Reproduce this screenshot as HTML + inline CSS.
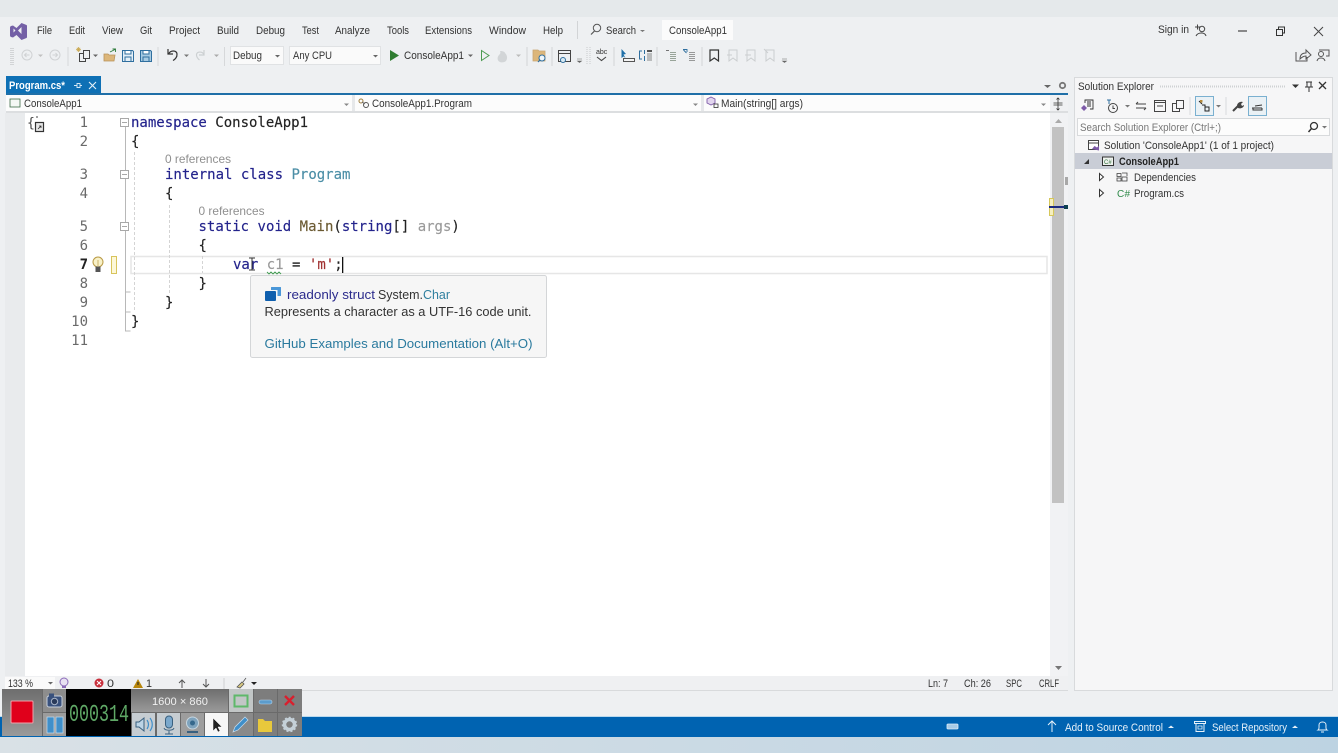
<!DOCTYPE html>
<html><head><meta charset="utf-8"><title>ConsoleApp1</title>
<style>
html,body{margin:0;padding:0;background:#eef0f2;overflow:hidden}
svg{display:block;width:1338px;height:753px;filter:blur(.35px)}
text{font-family:"Liberation Sans",sans-serif;font-size:11px;fill:#333}
.c text,text.c{font-family:"DejaVu Sans Mono","Liberation Mono",monospace;font-size:14px;fill:#222;stroke:#222;stroke-width:.15}
.n{font-family:"DejaVu Sans Mono","Liberation Mono",monospace;font-size:14px;fill:#6a6a6a;text-anchor:end}
.k{fill:#23238c;stroke:#23238c}.t{fill:#4b8ea6;stroke:#4b8ea6}.g{fill:#9a9a9a;stroke:#9a9a9a}
</style></head><body>
<svg xmlns="http://www.w3.org/2000/svg" viewBox="0 0 1338 753" width="1338" height="753">
<defs>
<linearGradient id="bot" x1="0" x2="1" y1="0" y2="0"><stop offset="0" stop-color="#d9e1e6"/><stop offset="1" stop-color="#bdd3e2"/></linearGradient>
<linearGradient id="rg" x1="0" x2="0" y1="0" y2="1"><stop offset="0" stop-color="#6e6e6e"/><stop offset="1" stop-color="#9a9a9a"/></linearGradient>
</defs>
<!-- base -->
<rect width="1338" height="753" fill="#eef0f2"/>
<rect width="1338" height="17" fill="#e5e9eb"/>
<rect y="737" width="1338" height="16" fill="url(#bot)"/>
<rect y="717" width="1338" height="20" fill="#0063b1"/>
<rect y="716" width="1338" height="1" fill="#b9d9ee"/>

<!-- logo -->
<path d="M10 27.500q0-1 1-1.500l2-.5 3.500 2.500 5-5 5 2q.5.300.5 1v11q0 .7-.5 1l-5 2-5-5-3.500 2.500-2-.5q-1-.500-1-1.500z" fill="#7460a6"/>
<path d="M13.500 28.500v4l2-2zM21.500 27l-3.500 3.500 3.500 3.500z" fill="#eef0f2"/>

<!-- menu -->
<g>
<text x="37" y="34" textLength="15" lengthAdjust="spacingAndGlyphs">File</text>
<text x="69" y="34" textLength="16" lengthAdjust="spacingAndGlyphs">Edit</text>
<text x="102" y="34" textLength="21" lengthAdjust="spacingAndGlyphs">View</text>
<text x="140" y="34" textLength="12" lengthAdjust="spacingAndGlyphs">Git</text>
<text x="169" y="34" textLength="31" lengthAdjust="spacingAndGlyphs">Project</text>
<text x="217" y="34" textLength="22" lengthAdjust="spacingAndGlyphs">Build</text>
<text x="256" y="34" textLength="29" lengthAdjust="spacingAndGlyphs">Debug</text>
<text x="302" y="34" textLength="17" lengthAdjust="spacingAndGlyphs">Test</text>
<text x="335" y="34" textLength="35" lengthAdjust="spacingAndGlyphs">Analyze</text>
<text x="387" y="34" textLength="22" lengthAdjust="spacingAndGlyphs">Tools</text>
<text x="425" y="34" textLength="47" lengthAdjust="spacingAndGlyphs">Extensions</text>
<text x="489" y="34" textLength="37" lengthAdjust="spacingAndGlyphs">Window</text>
<text x="543" y="34" textLength="20" lengthAdjust="spacingAndGlyphs">Help</text>
<rect x="577" y="21" width="1" height="18" fill="#d2d4d6"/>
<circle cx="597" cy="28" r="3.700" fill="none" stroke="#555"/><path d="M594.500 31l-3.500 3.500" stroke="#555" stroke-width="1.200"/>
<text x="606" y="34" textLength="30" lengthAdjust="spacingAndGlyphs">Search</text>
<path d="M640 30h5l-2.500 2z" fill="#777"/>
<rect x="662" y="20" width="71" height="20" fill="#fbfbfb"/>
<text x="669" y="34" textLength="58" lengthAdjust="spacingAndGlyphs" fill="#222">ConsoleApp1</text>
</g>

<!-- toolbar -->
<g fill="none" stroke="#b5b8ba">
<path d="M11 48v17M13 48v17" stroke-dasharray="1 1"/>
<circle cx="27" cy="55" r="5" stroke="#d0d2d4"/><path d="M29.500 55h-5m2-2l-2 2 2 2" stroke="#d0d2d4"/>
<path d="M38 54.500h5l-2.500 2.500z" fill="#c0c0c0" stroke="none"/>
<circle cx="55" cy="55" r="5" stroke="#d0d2d4"/><path d="M52.500 55h5m-2-2l2 2-2 2" stroke="#d0d2d4"/>
<path d="M68 47v19M158 47v19M224.500 47v19" stroke="#d6d8da"/>
<!-- new project -->
<path d="M76 49.500h5M78.500 47v5M76.800 47.800l3.400 3.400M80.200 47.800l-3.400 3.400" stroke="#c9a84f" stroke-width=".8"/>
<rect x="79.500" y="53.500" width="6" height="8" stroke="#444" fill="#eef0f2"/><rect x="83.500" y="50.500" width="6" height="8" stroke="#444" fill="#eef0f2"/>
<path d="M93 54.500h5l-2.500 2.500z" fill="#666" stroke="none"/>
<!-- open -->
<path d="M104 61v-7h4l1 1h6l-1 6z" fill="#dcb67a" stroke="#b8935a" stroke-width=".8"/><path d="M110 52l5-2.500M112.500 49h3v3" stroke="#2c7a3a" stroke-width=".9"/>
<!-- saves -->
<path d="M122.500 50.500h10l1 1v10h-11z" stroke="#2f6f9f" fill="#e4eff7"/><rect x="125" y="50.500" width="6" height="3.500" stroke="#2f6f9f" fill="#fff"/><rect x="125" y="57" width="6" height="4.500" stroke="#2f6f9f"/>
<path d="M140.500 50.500h10l1 1v10h-11z" stroke="#2f6f9f" fill="#a8cbe2"/><rect x="143" y="50.500" width="6" height="3.500" stroke="#2f6f9f" fill="#fff"/><rect x="143" y="57" width="6" height="4.500" stroke="#2f6f9f"/>
<!-- undo/redo -->
<path d="M168 49v5h5M168.500 54c2-4 8-4 8.500 0 .3 3-2 5.500-4 6.500" stroke="#333" stroke-width="1.200"/>
<path d="M184 54.500h5l-2.500 2.500z" fill="#777" stroke="none"/>
<path d="M204 50v5h-5M204 54.500c-2-3.500-7-3-7.500 0-.3 2 1.500 4.500 3 5.500" stroke="#ccd0d2" stroke-width="1.200"/>
<path d="M214 54.500h5l-2.500 2.500z" fill="#aaa" stroke="none"/>
</g>
<rect x="230.500" y="46.500" width="53" height="18" fill="#fafafa" stroke="#e0e2e4"/>
<text x="233" y="59" textLength="29" lengthAdjust="spacingAndGlyphs">Debug</text>
<path d="M275 55h5l-2.500 2.500z" fill="#666"/>
<rect x="289.500" y="46.500" width="91" height="18" fill="#fafafa" stroke="#e0e2e4"/>
<text x="293" y="59" textLength="39" lengthAdjust="spacingAndGlyphs">Any CPU</text>
<path d="M373 55h5l-2.500 2.500z" fill="#666"/>
<path d="M390 50l9 5.500-9 5.500z" fill="#2f7d32"/>
<text x="404" y="59" textLength="60" lengthAdjust="spacingAndGlyphs">ConsoleApp1</text>
<path d="M468 54.500h5l-2.500 2.500z" fill="#666"/>
<path d="M481.500 50.500l7.500 5-7.500 5z" fill="none" stroke="#4c9a50"/>
<path d="M500 62c-3-1-3-5-1-7 1-1 2-2 1-4 3 0 5 1 5 2 2 2 3 5 1 8-1 1-4 2-6 1z" fill="#d2d5d7"/>
<path d="M516 54.500h5l-2.500 2.500z" fill="#bbb"/>
<g fill="none" stroke="#d2d4d6"><path d="M527 47v19M552 47v19M614 47v19M657 47v19M702 47v19"/></g>
<!-- folder search -->
<path d="M533 50h5l1 1h6v10h-12z" fill="#dcb67a" stroke="#c9a673" stroke-width=".8"/><circle cx="542" cy="58" r="3" fill="#eef5fa" stroke="#2f6f9f"/><path d="M540 60l-2 2" stroke="#2f6f9f" stroke-width="1.200"/>
<!-- window -->
<rect x="558.500" y="50.500" width="12" height="11" fill="none" stroke="#444"/><path d="M558.500 53.500h12" stroke="#444"/><circle cx="563" cy="60" r="2.500" fill="#d9e9f3" stroke="#2f6f9f"/>
<path d="M577 59h5M577.500 61h4l-2 1.500z" fill="#666" stroke="#666" stroke-width=".6"/>
<path d="M587 47v18M590 47v18" stroke="#c8cacc" stroke-dasharray="1 1"/>
<text x="596" y="54" style="font-size:7px" fill="#444">abc</text><path d="M597 57l4.500 3.500 4.500-3.500" fill="none" stroke="#444" stroke-width="1.100"/>
<!-- comment tools -->
<path d="M621.500 49v9l2-1.500 2 1.500-2-3.500 2.500-.5z" fill="#1f6fa8"/><rect x="623.500" y="58.500" width="11" height="3" fill="#f4f4f4" stroke="#444" stroke-width=".9"/>
<path d="M642 51h-2.500v8h2.500" fill="none" stroke="#2f6f9f"/><path d="M644.500 50v4M644.500 56v5" stroke="#2f6f9f"/><rect x="647" y="50" width="5" height="2" fill="#555"/><path d="M647 54h5M647 56h5M647 58h5M647 60h5" stroke="#666" stroke-width=".8"/>
<path d="M666 50.500h3" stroke="#555" stroke-width=".8"/><path d="M670 52.500h6M670 54.500h6M670 56.500h6M670 58.500h6M670 60.500h6" stroke="#7c8a7c" stroke-width=".8"/>
<path d="M683 49.500h4v2.500M683.500 50l3 3" fill="none" stroke="#2f6f9f" stroke-width=".9"/><path d="M689 52.500h6M689 54.500h6M689 56.500h6M689 58.500h6M689 60.500h6" stroke="#7c7c7c" stroke-width=".8"/>
<!-- bookmarks -->
<path d="M710 50h8.500v11l-4.250-3-4.250 3z" fill="none" stroke="#333" stroke-width="1.200"/>
<g fill="none" stroke="#cbced0"><path d="M729 50h8v11l-4-3-4 3zM727 55h5"/><path d="M747 50h8v11l-4-3-4 3zM745 55h6"/><path d="M766 50h8v11l-4-3-4 3zM764 49l4 4"/></g>
<path d="M782 59h5M782.500 61h4l-2 1.500z" fill="#666" stroke="#666" stroke-width=".6"/>

<!-- right title -->
<text x="1158" y="33" textLength="31" lengthAdjust="spacingAndGlyphs">Sign in</text>
<circle cx="1202" cy="29" r="2.700" fill="none" stroke="#444"/><path d="M1196 36c2-4 9-4 10 0M1195 27h5M1197.500 24.500v5" fill="none" stroke="#444"/>
<path d="M1238 31h9" stroke="#444" stroke-width="1.200"/>
<rect x="1276.500" y="29.500" width="6" height="6" fill="none" stroke="#333"/><path d="M1278.500 29v-2h6v6h-2" fill="none" stroke="#333"/>
<path d="M1314 27l9 9M1323 27l-9 9" stroke="#444"/>
<path d="M1296 52v9h11v-4M1300 59c0-4 2-6 6-6v-3l5 5-5 4v-3c-2 0-4 1-6 3z" fill="none" stroke="#555"/>
<circle cx="1321" cy="54" r="2.500" fill="none" stroke="#555"/><path d="M1317 61c1-4 7-4 8 0M1319 50h10v6h-3" fill="none" stroke="#555"/>

<!-- document tab -->
<rect x="6" y="76" width="95" height="18" fill="#0e70b5"/>
<text x="9" y="89" textLength="56" lengthAdjust="spacingAndGlyphs" style="font-weight:bold;fill:#fff">Program.cs*</text>
<path d="M74 85.500h3M77 83.500v4h3v-4zM80 85.500h2" fill="none" stroke="#d6e8f5" stroke-width=".9"/>
<path d="M89 82l7 7M96 82l-7 7" stroke="#e6f1f9" stroke-width="1.100"/>
<path d="M1044 85h7l-3.500 3z" fill="#666"/>
<circle cx="1062.500" cy="85.500" r="2.700" fill="none" stroke="#777" stroke-width="1.800"/>
<rect x="6" y="93" width="1062" height="2" fill="#1f6fa8"/>

<!-- nav bar -->
<rect x="6" y="95" width="1044" height="16" fill="#fcfcfc"/>
<rect x="6" y="111" width="1062" height="2" fill="#dcdee0"/>
<rect x="10" y="99" width="10" height="8" fill="#f4f8f4" stroke="#3d6b47" stroke-width=".8"/>
<text x="24" y="107" textLength="58" lengthAdjust="spacingAndGlyphs">ConsoleApp1</text>
<path d="M344 103.500h5l-2.500 2.500z" fill="#888"/>
<rect x="352" y="95" width="3" height="16" fill="#e6e8ea"/>
<circle cx="361" cy="101" r="2" fill="none" stroke="#a08040"/><circle cx="366" cy="105" r="2.500" fill="none" stroke="#555"/><path d="M362 102l3 2" stroke="#666"/>
<text x="372" y="107" textLength="100" lengthAdjust="spacingAndGlyphs">ConsoleApp1.Program</text>
<path d="M693 103.500h5l-2.500 2.500z" fill="#888"/>
<rect x="701" y="95" width="3" height="16" fill="#e6e8ea"/>
<path d="M711 97l4 2v4l-4 2-4-2v-4z" fill="#e2d6ee" stroke="#7d5aa8" stroke-width=".9"/><rect x="714" y="104" width="4" height="3.500" fill="none" stroke="#333" stroke-width=".8"/>
<text x="721" y="107" textLength="82" lengthAdjust="spacingAndGlyphs">Main(string[] args)</text>
<path d="M1041 103.500h5l-2.500 2.500z" fill="#888"/>
<rect x="1050" y="95" width="18" height="16" fill="#f0f1f3"/>
<path d="M1058 98v12M1053.500 103h9M1053.500 105h9M1056.500 99.500l1.500-1.500 1.500 1.500M1056.500 108.500l1.500 1.500 1.500-1.500" fill="none" stroke="#333" stroke-width=".8"/>

<!-- editor -->
<rect x="5" y="113" width="1063" height="563" fill="#e9ebed"/>
<rect x="25" y="113" width="1025" height="563" fill="#fff"/>
<rect x="1050" y="113" width="18" height="563" fill="#f1f2f4"/>
<rect x="1052" y="127" width="12" height="376" fill="#c2c2c2"/>
<rect x="1065" y="177" width="3" height="8" fill="#a8a8a8"/>
<path d="M1055 123l3.500-4 3.500 4z" fill="#aaa"/>
<path d="M1055 666l3.500 4 3.500-4z" fill="#777"/>
<rect x="1049.500" y="198.500" width="4" height="17" fill="#f5efc0" stroke="#d6c75a"/>
<rect x="1049" y="206" width="16" height="2" fill="#1a2a80"/>
<rect x="1064" y="205" width="4" height="4" fill="#0c3f50"/>

<!-- current line -->
<rect x="131" y="256.500" width="916" height="17" fill="#fff" stroke="#e6e6e6" stroke-width="1.500"/>

<!-- structural icon -->
<text x="27" y="127" style="font-family:'DejaVu Sans Mono',monospace;font-size:13px;fill:#444">{</text>
<path d="M36 117h2" stroke="#444"/><rect x="35.500" y="122.500" width="8" height="9" fill="#e6e6e6" stroke="#333" stroke-width="1.200"/><path d="M38 129l3-3m-2 0h2v2" fill="none" stroke="#333" stroke-width=".8"/>

<!-- line numbers -->
<text class="n" x="88" y="127">1</text>
<text class="n" x="88" y="146">2</text>
<text class="n" x="88" y="179">3</text>
<text class="n" x="88" y="198">4</text>
<text class="n" x="88" y="231">5</text>
<text class="n" x="88" y="250">6</text>
<text class="n" x="88" y="269" style="fill:#222;font-weight:bold">7</text>
<text class="n" x="88" y="288">8</text>
<text class="n" x="88" y="307">9</text>
<text class="n" x="88" y="326">10</text>
<text class="n" x="88" y="345">11</text>

<!-- light bulb + change bar -->
<circle cx="98" cy="262" r="5" fill="#f8f1c8" stroke="#b99a45"/><rect x="95.500" y="266.500" width="5" height="5.500" fill="#555"/><path d="M98 260v6" stroke="#b99a45" stroke-width=".7"/>
<rect x="111.500" y="256.500" width="5" height="17" fill="#fdf8d8" stroke="#d8c45c"/>

<!-- outlining -->
<path d="M125.500 127v204h5M125.500 292h5M125.500 312h5" fill="none" stroke="#b8b8b8"/>
<g fill="#fff" stroke="#a8a8a8">
<rect x="120.500" y="118.500" width="8" height="8"/><path d="M122 122.500h5"/>
<rect x="120.500" y="170.500" width="8" height="8"/><path d="M122 174.500h5"/>
<rect x="120.500" y="222.500" width="8" height="8"/><path d="M122 226.500h5"/>
</g>
<g stroke="#d4d4d4" stroke-dasharray="3 2" fill="none">
<path d="M134.500 152v160M169.500 205v88M202.500 256v17"/>
</g>

<!-- code -->
<g class="c">
<text x="131" y="127"><tspan class="k">namespace</tspan> ConsoleApp1</text>
<text x="131" y="146">{</text>
<text x="165" y="179"><tspan class="k">internal</tspan> <tspan class="k">class</tspan> <tspan class="t">Program</tspan></text>
<text x="165" y="198">{</text>
<text x="198.500" y="231"><tspan class="k">static</tspan> <tspan class="k">void</tspan> <tspan style="fill:#6b5a32;stroke:#6b5a32">Main</tspan>(<tspan class="k">string</tspan>[] <tspan class="g">args</tspan>)</text>
<text x="198.500" y="250">{</text>
<text x="233" y="269"><tspan class="k">var</tspan> <tspan class="g">c1</tspan> = <tspan style="fill:#a03030;stroke:#a03030">'m'</tspan>;</text>
<text x="198.500" y="288">}</text>
<text x="165" y="307">}</text>
<text x="131" y="326">}</text>
</g>
<rect x="342" y="257" width="1.300" height="16" fill="#111"/>
<path d="M267 272l2 2 2-2 2 2 2-2 2 2 2-2 2 2" fill="none" stroke="#3f9a4f" stroke-width=".9"/>
<path d="M249 258h6M249 270h6M252 258v12" stroke="#333" stroke-width="1"/>

<text x="165" y="163" textLength="66" lengthAdjust="spacingAndGlyphs" style="fill:#8f8f8f;font-size:12px">0 references</text>
<text x="198.500" y="215" textLength="66" lengthAdjust="spacingAndGlyphs" style="fill:#8f8f8f;font-size:12px">0 references</text>

<!-- tooltip -->
<rect x="250.500" y="275.500" width="296" height="82" rx="2" fill="#f6f6f6" stroke="#d4d6d8"/>
<path d="M271 290v-2.500q0-.5.500-.5h9q.5 0 .5.500v8q0 .5-.5.500h-3v-6z" fill="#4a97d8"/><rect x="265" y="291" width="11" height="10" rx="1" fill="#0f5fae"/>
<text x="287" y="299" textLength="88" lengthAdjust="spacingAndGlyphs" style="font-size:13px;fill:#2b2b8c">readonly struct</text>
<text x="378" y="299" textLength="45" lengthAdjust="spacingAndGlyphs" style="font-size:13px">System.</text>
<text x="423" y="299" textLength="27" lengthAdjust="spacingAndGlyphs" style="font-size:13px;fill:#2f7f9f">Char</text>
<text x="264.500" y="316" textLength="267" lengthAdjust="spacingAndGlyphs" style="font-size:13px">Represents a character as a UTF-16 code unit.</text>
<text x="264.500" y="348" textLength="268" lengthAdjust="spacingAndGlyphs" style="font-size:13px;fill:#2a7a9e">GitHub Examples and Documentation (Alt+O)</text>

<!-- editor status -->
<rect x="5" y="676" width="1063" height="14" fill="#eff0f2"/>
<rect x="5" y="690" width="1063" height="1" fill="#d8dadc"/>
<rect x="5" y="677" width="50" height="13" fill="#fafafa"/>
<text x="8" y="687" textLength="25" lengthAdjust="spacingAndGlyphs">133 %</text>
<path d="M48 682h5l-2.500 2.500z" fill="#666"/>
<circle cx="64" cy="682" r="4" fill="#e8e0f2" stroke="#8a6ab8"/><rect x="62" y="686" width="4" height="2" fill="#8a6ab8"/>
<circle cx="99" cy="683" r="4.500" fill="#c8303c"/><path d="M97 681l4 4M101 681l-4 4" stroke="#fff"/>
<text x="107" y="687" textLength="7" lengthAdjust="spacingAndGlyphs">0</text>
<path d="M133 688l5-9 5 9z" fill="#b8860b"/><path d="M138 682v3" stroke="#222"/>
<text x="146" y="687" textLength="6" lengthAdjust="spacingAndGlyphs">1</text>
<path d="M182 688v-8M179 683l3-3 3 3M206 679v8M203 684l3 3 3-3" fill="none" stroke="#555"/>
<path d="M224 678v12" stroke="#cfd1d3"/>
<path d="M237 687l5-5 2 2-4 4zM243 682l3-4" fill="#d8c880" stroke="#555" stroke-width=".8"/>
<path d="M251 682h6l-3 3z" fill="#222"/>
<text x="928" y="687" textLength="20" lengthAdjust="spacingAndGlyphs">Ln: 7</text>
<text x="964" y="687" textLength="27" lengthAdjust="spacingAndGlyphs">Ch: 26</text>
<text x="1006" y="687" textLength="16" lengthAdjust="spacingAndGlyphs">SPC</text>
<text x="1039" y="687" textLength="20" lengthAdjust="spacingAndGlyphs">CRLF</text>

<!-- solution explorer -->
<rect x="1074.500" y="77.500" width="258" height="613" fill="#f6f6f7" stroke="#d8dadc"/>
<text x="1078" y="90" textLength="76" lengthAdjust="spacingAndGlyphs">Solution Explorer</text>
<path d="M1160 86h125M1160 87h125" stroke="#cfd1d3" stroke-dasharray="1 1"/>
<path d="M1292 84.500h7l-3.500 3.500z" fill="#333"/>
<path d="M1306 82h6M1307 82v5h4v-5M1309 87v5M1305 87h8" fill="none" stroke="#333"/>
<path d="M1319 82l7 7M1326 82l-7 7" stroke="#333" stroke-width="1.300"/>
<!-- SE toolbar -->
<path d="M1085 103v-3h8v9h-3M1087 102h4M1087 104h4M1087 106h4" fill="none" stroke="#333" stroke-width=".9"/><path d="M1081 108l3-3 3 3-3 3z" fill="#7d5aa8"/>
<circle cx="1113" cy="108" r="4.500" fill="none" stroke="#444"/><path d="M1113 105.500v3h2" fill="none" stroke="#444"/><path d="M1107 100h4M1109 100v4" stroke="#2f6f9f"/>
<path d="M1125 105h5l-2.500 2.500z" fill="#777"/>
<path d="M1136 104h10M1136 104l2-2M1136 108h10M1146 108l-2 2" fill="none" stroke="#444"/>
<rect x="1154.500" y="100.500" width="11" height="11" fill="none" stroke="#444"/><path d="M1154.500 102.500h11M1157 106h6" stroke="#444"/>
<rect x="1172.500" y="103.500" width="7" height="8" fill="none" stroke="#444"/><rect x="1176.500" y="100.500" width="7" height="8" fill="#f6f6f7" stroke="#444"/>
<path d="M1190 97v18M1226 97v18" stroke="#d8dadc"/>
<rect x="1195.500" y="96.500" width="18" height="19" fill="#eaf1f5" stroke="#7ab0d0"/>
<path d="M1199 101l3 3M1202 105h3v4" fill="none" stroke="#222"/><rect x="1205" y="107" width="4" height="4" fill="none" stroke="#222"/><rect x="1200" y="100" width="2.500" height="2.500" fill="#b58a3a"/>
<path d="M1216 105h5l-2.500 2.500z" fill="#777"/>
<path d="M1233 111l5-5" stroke="#444" stroke-width="2"/><path d="M1237 106c0-3 3-5 6-4l-2 2 1 2 2-1c0 3-4 4-6 3z" fill="#444"/>
<rect x="1248.500" y="96.500" width="18" height="19" fill="#eaf1f5" stroke="#7ab0d0"/>
<path d="M1252 108h10M1253 108v2h9v-2M1255 106l7-1" fill="none" stroke="#333"/>
<!-- search -->
<rect x="1077.500" y="118.500" width="252" height="17" fill="#fcfcfc" stroke="#d8dadc"/>
<text x="1080" y="131" textLength="141" lengthAdjust="spacingAndGlyphs" style="fill:#777">Search Solution Explorer (Ctrl+;)</text>
<circle cx="1314" cy="126" r="3.500" fill="none" stroke="#333" stroke-width="1.300"/><path d="M1311.500 128.500l-3 3.500" stroke="#333" stroke-width="1.500"/>
<path d="M1322 126h5l-2.500 2.500z" fill="#777"/>
<!-- tree -->
<rect x="1088.500" y="140.500" width="10" height="9" fill="#fff" stroke="#444"/><path d="M1088 143h11" stroke="#444"/><path d="M1092 149l2.500-3 2.500 1.500 2-2v5z" fill="#7d5aa8"/>
<text x="1104" y="149" textLength="170" lengthAdjust="spacingAndGlyphs">Solution 'ConsoleApp1' (1 of 1 project)</text>
<rect x="1075" y="153" width="257" height="16" fill="#c9cdd6"/>
<path d="M1084 164l5-5v5z" fill="#333"/>
<rect x="1102.500" y="157" width="11" height="8.500" fill="#eef2ee" stroke="#333"/>
<text x="1104" y="164" style="font-size:6px;fill:#2f6f3a">C#</text>
<text x="1119" y="165" textLength="60" lengthAdjust="spacingAndGlyphs" style="font-weight:bold;fill:#222">ConsoleApp1</text>
<path d="M1099.500 173.500l4 3.500-4 3.500zM1099.500 189.500l4 3.500-4 3.500z" fill="#fff" stroke="#333"/>
<rect x="1117" y="173.500" width="4" height="3" fill="none" stroke="#444" stroke-width=".8"/><rect x="1122" y="177" width="5" height="4" fill="none" stroke="#444" stroke-width=".8"/><rect x="1117" y="178" width="4" height="3" fill="none" stroke="#444" stroke-width=".8"/><path d="M1122 173h5v3" fill="none" stroke="#444" stroke-width=".8"/>
<text x="1134" y="181" textLength="62" lengthAdjust="spacingAndGlyphs">Dependencies</text>
<text x="1117" y="197" textLength="13" style="font-size:10px;fill:#2f8a4a">C#</text>
<text x="1134" y="197" textLength="50" lengthAdjust="spacingAndGlyphs">Program.cs</text>

<!-- status bar -->
<rect x="947" y="724" width="11" height="5" rx="1" fill="#a8cbe6" stroke="#dcecf8" stroke-width=".8"/>
<path d="M1052 732v-11M1048 725l4-4 4 4" fill="none" stroke="#e6f1f9"/>
<text x="1065" y="731" textLength="98" lengthAdjust="spacingAndGlyphs" style="fill:#e6f1f9">Add to Source Control</text>
<path d="M1168 728h6l-3-2.500z" fill="#e6f1f9"/>
<rect x="1194.500" y="721.500" width="11" height="2" fill="none" stroke="#e6f1f9"/><rect x="1196" y="723.500" width="8" height="8" fill="none" stroke="#e6f1f9"/><path d="M1198 726h4v3h-4z" fill="none" stroke="#e6f1f9" stroke-width=".8"/>
<text x="1212" y="731" textLength="75" lengthAdjust="spacingAndGlyphs" style="fill:#e6f1f9">Select Repository</text>
<path d="M1292 728h6l-3-2.500z" fill="#e6f1f9"/>
<path d="M1318 730c1.500-1 1-3 1-5 0-4 7-4 7 0 0 2-.500 4 1 5zM1321 732h3" fill="none" stroke="#e6f1f9"/>

<!-- recorder panel -->
<rect x="2" y="689" width="300" height="47" fill="#6a6a6a"/>
<rect x="2" y="689" width="40" height="47" fill="url(#rg)"/>
<rect x="11" y="701" width="22" height="22" rx="1" fill="#e0001b" stroke="#f0a0a8" stroke-width="1"/>
<rect x="43" y="689" width="23" height="23" fill="#8d8d8d"/>
<rect x="47" y="696" width="15" height="11" rx="2" fill="#39517d" stroke="#c8d0dc"/><circle cx="54.500" cy="701.500" r="3.200" fill="#2a3a5a" stroke="#a8b4c8"/><rect x="49" y="693.500" width="5" height="3" fill="#39517d"/>
<rect x="43" y="713" width="23" height="23" fill="#9c9c9c"/>
<rect x="47" y="717" width="7" height="16" fill="#3f8fca" stroke="#c8dcec" stroke-width=".7"/><rect x="56" y="717" width="7" height="16" fill="#3f8fca" stroke="#c8dcec" stroke-width=".7"/>
<rect x="66" y="689" width="65" height="47" fill="#000"/>
<text x="69" y="721" textLength="60" lengthAdjust="spacingAndGlyphs" style="font-family:'Liberation Mono',monospace;font-size:24px;fill:#5fa866">000314</text>
<rect x="131" y="689" width="97" height="23" fill="url(#rg)"/>
<text x="152" y="705" textLength="56" lengthAdjust="spacingAndGlyphs" style="fill:#f0f0f0;font-size:11px">1600 × 860</text>
<rect x="132" y="713" width="23" height="23" fill="#c6cdd2"/>
<path d="M136 722h3l5-4v13l-5-4h-3z" fill="#bcd4e6" stroke="#39607f"/><path d="M147 720c2 3 2 6 0 9M150 718c3 4 3 9 0 13" fill="none" stroke="#3f8fca" stroke-width="1.200"/>
<rect x="157" y="713" width="23" height="23" fill="#c6cdd2"/>
<rect x="165.500" y="716" width="7" height="12" rx="3.500" fill="#7aa8cc" stroke="#39607f"/><path d="M164 728c1 3 9 3 10 0M169 731v3M165 734h8" fill="none" stroke="#39607f"/>
<rect x="181" y="713" width="23" height="23" fill="#9d9d9d"/>
<circle cx="192.500" cy="723" r="6" fill="#7ea3bd" stroke="#c6d6e0"/><circle cx="192.500" cy="723" r="2.500" fill="#35688c"/><path d="M187 732h11" stroke="#39607f" stroke-width="2"/>
<rect x="205" y="713" width="23" height="23" fill="#f6f6f6"/>
<path d="M213 718v13l3-3 2 4 2-1-2-4h4z" fill="#222" stroke="#fff" stroke-width=".5"/>
<rect x="229" y="689" width="24" height="23" fill="#c2c6c6"/>
<rect x="234.500" y="695.500" width="13" height="11" fill="none" stroke="#5fb86a" stroke-width="2"/>
<rect x="254" y="689" width="23" height="23" fill="#7d7d7d"/>
<rect x="259" y="700" width="13" height="4" rx="2" fill="#5c9ccc" stroke="#b8d4e8" stroke-width=".6"/>
<rect x="278" y="689" width="24" height="23" fill="#7d7d7d"/>
<path d="M285 696l9 9M294 696l-9 9" stroke="#d8202e" stroke-width="2.400"/>
<rect x="229" y="713" width="24" height="23" fill="#8a8a8a"/>
<path d="M233 732l2-5 10-10 3 3-10 10z" fill="#3f8fca" stroke="#c8dcec" stroke-width=".7"/>
<rect x="254" y="713" width="23" height="23" fill="#7d7d7d"/>
<path d="M258 732v-13h5l2 2h7v11z" fill="#e8c83c"/>
<rect x="278" y="713" width="24" height="23" fill="#7d7d7d"/>
<circle cx="289.500" cy="724.500" r="5" fill="none" stroke="#c4d0d8" stroke-width="3.500"/><circle cx="289.500" cy="724.500" r="7" fill="none" stroke="#c4d0d8" stroke-width="1.500" stroke-dasharray="2 2"/>
</svg>
</body></html>
